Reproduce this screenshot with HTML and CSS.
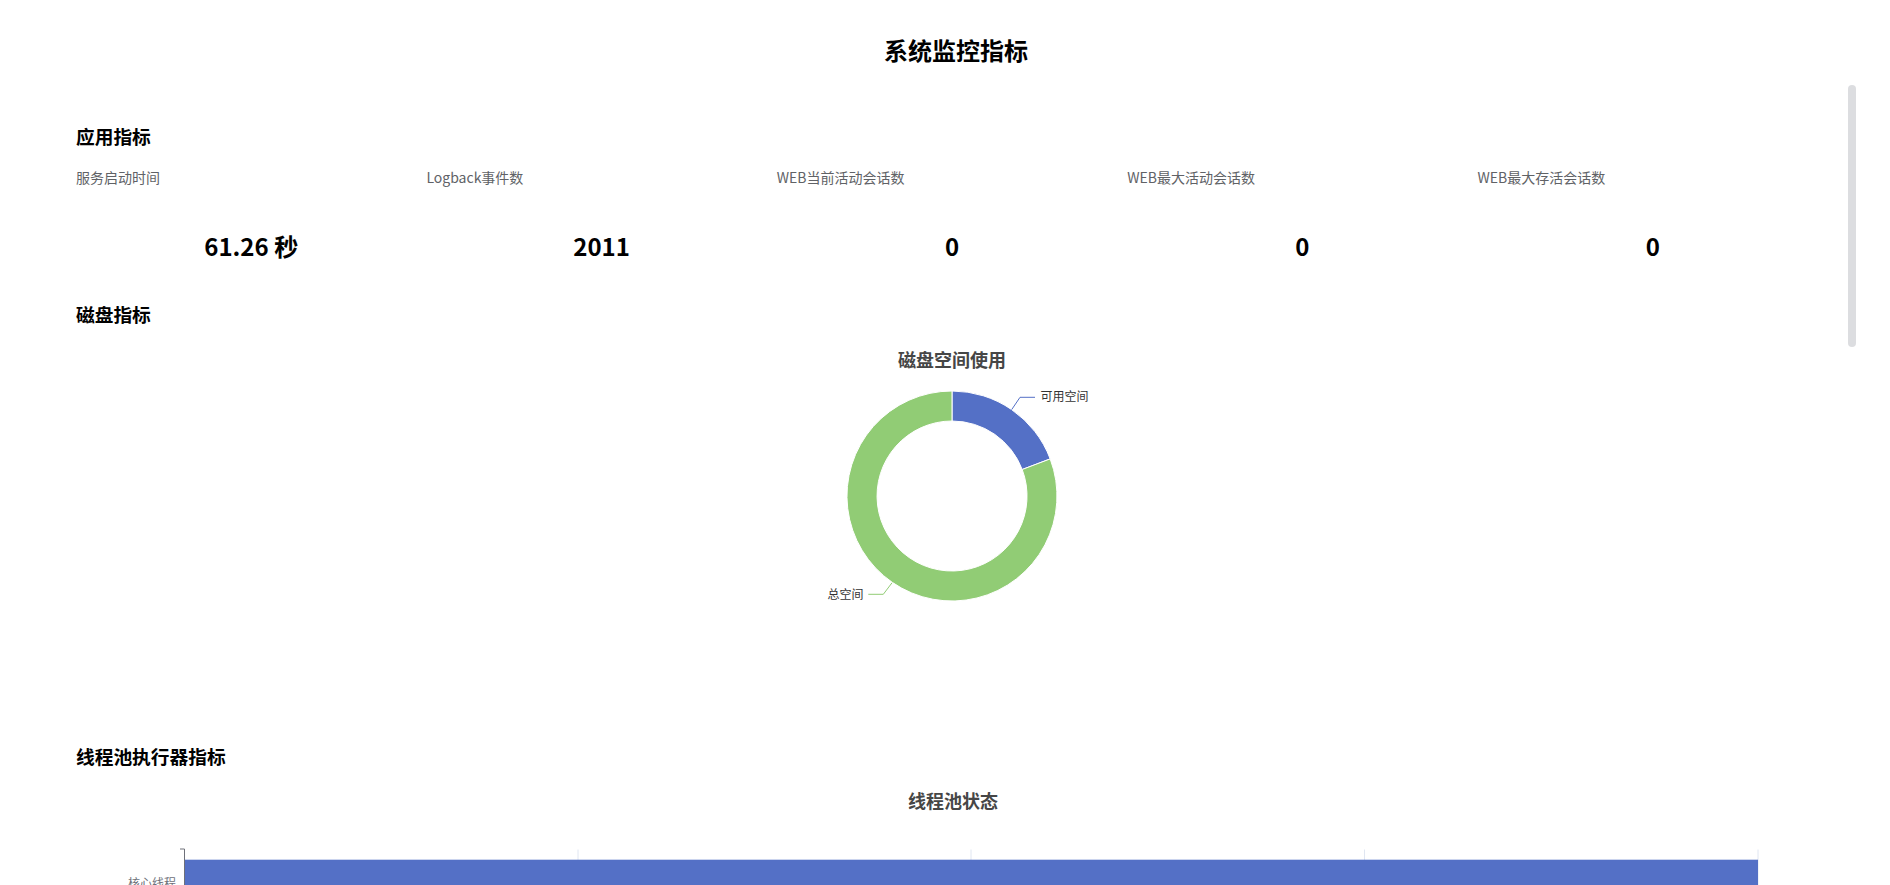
FILE: index.html
```html
<!DOCTYPE html>
<html lang="zh-CN">
<head>
<meta charset="utf-8">
<title>系统监控指标</title>
<link rel="stylesheet" href="styles.css">
</head>
<body>
<div class="page">
  <h1 class="page-title">系统监控指标</h1>

  <section class="section section-app">
    <h2 class="section-title">应用指标</h2>
    <div class="metrics">
      <div class="metric"><div class="metric-label">服务启动时间</div><div class="metric-value">61.26 秒</div></div>
      <div class="metric"><div class="metric-label">Logback事件数</div><div class="metric-value">2011</div></div>
      <div class="metric"><div class="metric-label">WEB当前活动会话数</div><div class="metric-value">0</div></div>
      <div class="metric"><div class="metric-label">WEB最大活动会话数</div><div class="metric-value">0</div></div>
      <div class="metric"><div class="metric-label">WEB最大存活会话数</div><div class="metric-value">0</div></div>
    </div>
  </section>

  <section class="section section-disk">
    <h2 class="section-title">磁盘指标</h2>
    <svg class="chart chart-disk" viewBox="0 0 1752 416" width="1752" height="416">
      <text class="chart-title" x="876" y="32">磁盘空间使用</text>
      <path d="M876 64 A105 105 0 0 1 974.2 131.9 L946.2 142.5 A75 75 0 0 0 876 94 Z" fill="#5470c6" stroke="#fff" stroke-width="1"/>
      <path d="M974.2 131.9 A105 105 0 1 1 876 64 L876 94 A75 75 0 1 0 946.2 142.5 Z" fill="#91cc75" stroke="#fff" stroke-width="1"/>
      <polyline points="935.7,82.6 944,70.3 959,70.3" fill="none" stroke="#5470c6" stroke-width="1"/>
      <text class="pie-label" x="964.5" y="68.3">可用空间</text>
      <polyline points="816,255.8 807.3,267.3 792.3,267.3" fill="none" stroke="#91cc75" stroke-width="1"/>
      <text class="pie-label" x="787.5" y="266.3" text-anchor="end">总空间</text>
    </svg>
  </section>

  <section class="section section-pool">
    <h2 class="section-title">线程池执行器指标</h2>
    <svg class="chart chart-pool" viewBox="0 0 1752 200" width="1752" height="200">
      <text class="chart-title" x="877" y="30.5">线程池状态</text>
      <line x1="502" y1="80.5" x2="502" y2="200" stroke="#e0e6f1" stroke-width="1"/>
      <line x1="895" y1="80.5" x2="895" y2="200" stroke="#e0e6f1" stroke-width="1"/>
      <line x1="1288.5" y1="80.5" x2="1288.5" y2="200" stroke="#e0e6f1" stroke-width="1"/>
      <line x1="1682" y1="80.5" x2="1682" y2="200" stroke="#e0e6f1" stroke-width="1"/>
      <rect x="108.5" y="90.7" width="1573.5" height="60" fill="#5470c6"/>
      <line x1="108.5" y1="80" x2="108.5" y2="200" stroke="#6e7079" stroke-width="1"/>
      <line x1="104" y1="80" x2="108.5" y2="80" stroke="#6e7079" stroke-width="1"/>
      <text class="axis-label" x="100" y="119" text-anchor="end">核心线程</text>
    </svg>
  </section>

  <div class="scroll-thumb"></div>
</div>
</body>
</html>
```

FILE: styles.css
```css
html, body {
  margin: 0;
  padding: 0;
  overflow: hidden;
  background: #ffffff;
}

body {
  font-family: "Noto Sans CJK SC", "Noto Sans", sans-serif;
  color: #000000;
}

.page {
  position: relative;
  padding: 34px 62px 0 76px;
  height: 885px;
  box-sizing: border-box;
}

.page-title {
  margin: 0 -8px 0 0;
  font-size: 24px;
  line-height: 32px;
  font-weight: 700;
  text-align: center;
}

.section-title {
  margin: 0;
  font-size: 18.72px;
  line-height: 26px;
  font-weight: 700;
}

.section-app {
  margin-top: 57px;
}

.section-disk {
  margin-top: 39.5px;
}

.metrics {
  display: grid;
  grid-template-columns: repeat(5, 350.4px);
  margin-top: 18px;
}

.metric-label {
  font-size: 14px;
  line-height: 20px;
  color: #606266;
}

.metric-value {
  margin-top: 42.5px;
  font-size: 24px;
  line-height: 32px;
  font-weight: 700;
  text-align: center;
}

.chart {
  display: block;
}

.chart-title {
  font-size: 18px;
  font-weight: 700;
  fill: #464646;
  text-anchor: middle;
  dominant-baseline: central;
}

.pie-label {
  font-size: 12px;
  fill: #333333;
  dominant-baseline: central;
}

.axis-label {
  font-size: 12px;
  fill: #6e7079;
}

.scroll-thumb {
  position: absolute;
  left: 1848px;
  top: 85px;
  width: 8px;
  height: 262px;
  border-radius: 4px;
  background: #dcdde0;
}
```
